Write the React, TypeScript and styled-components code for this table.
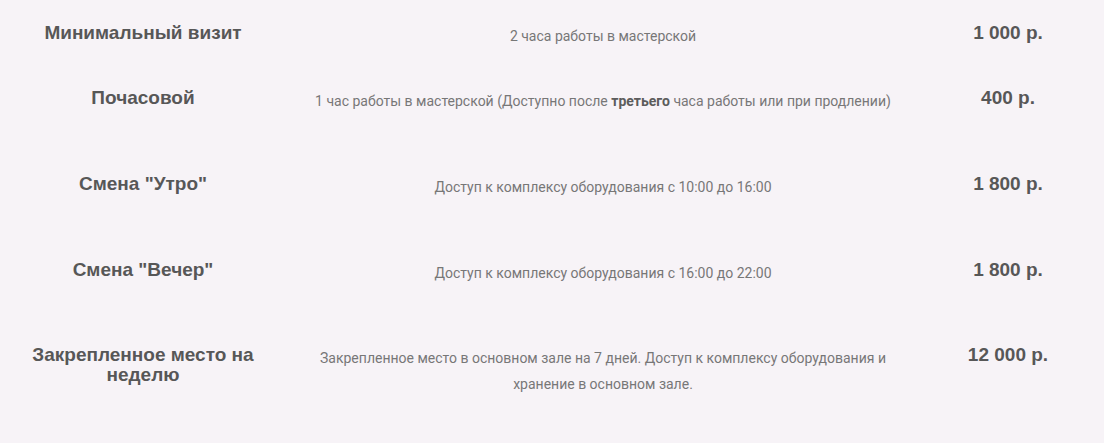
import React from 'react';
import styled, { createGlobalStyle } from 'styled-components';

const GlobalStyle = createGlobalStyle`
  html, body {
    margin: 0;
    padding: 0;
    background: #f7f3f7;
  }
`

const Page = styled.div`
  width: 1104px;
  min-height: 443px;
  padding-top: 23px;
  box-sizing: border-box;
  background: #f7f3f7;
`

const Row = styled.div<{ height?: number }>`
  display: grid;
  grid-template-columns: 286px 634px 176px;
  align-items: start;
  height: ${({ height }) => height ? `${height}px` : 'auto'};
`

const Title = styled.div`
  font-family: "Liberation Sans", Arial, sans-serif;
  font-weight: 700;
  font-size: 19px;
  line-height: 20px;
  color: #575757;
  text-align: center;
  padding: 0 16px;
`

const Desc = styled.p`
  margin: 0;
  padding: 0 25px;
  font-family: Roboto, "Open Sans", sans-serif;
  font-size: 14px;
  line-height: 26px;
  color: #777;
  text-align: center;

  b {
    font-weight: 700;
    color: #5c5c5c;
  }
`

const Price = styled.div`
  font-family: "Liberation Sans", Arial, sans-serif;
  font-weight: 700;
  font-size: 19px;
  line-height: 20px;
  color: #575757;
  text-align: center;
`

interface ITariff {
  title: React.ReactNode
  desc: React.ReactNode
  price: string
  height?: number
}

const tariffs: ITariff[] = [
  { title: 'Минимальный визит', desc: '2 часа работы в мастерской', price: '1 000 р.', height: 65 },
  {
    title: 'Почасовой',
    desc: <>1 час работы в мастерской (Доступно после <b>третьего</b> часа работы или при продлении)</>,
    price: '400 р.',
    height: 86,
  },
  { title: 'Смена "Утро"', desc: 'Доступ к комплексу оборудования с 10:00 до 16:00', price: '1 800 р.', height: 86 },
  { title: 'Смена "Вечер"', desc: 'Доступ к комплексу оборудования с 16:00 до 22:00', price: '1 800 р.', height: 85 },
  {
    title: 'Закрепленное место на неделю',
    desc: 'Закрепленное место в основном зале на 7 дней. Доступ к комплексу оборудования и хранение в основном зале.',
    price: '12 000 р.',
  },
]

function App(): JSX.Element {
  return (
    <>
      <GlobalStyle />
      <Page>
        {tariffs.map((t, i) => (
          <Row key={i} height={t.height}>
            <Title>{t.title}</Title>
            <Desc>{t.desc}</Desc>
            <Price>{t.price}</Price>
          </Row>
        ))}
      </Page>
    </>
  );
}

export default App;
